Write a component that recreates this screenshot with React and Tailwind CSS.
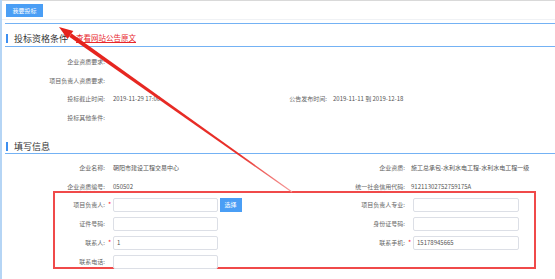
import React from "react";

const InfoRow = ({ label, value, right, rightValue, rightStart = 222, cls = "h-[18.5px]" }) => (
  <div className={`flex items-center ${cls}`}>
    <div className="flex items-center" style={{ width: rightStart }}>
      <span className="w-[100px] text-right whitespace-nowrap text-[#666]">{label}</span>
      <span className="ml-[8px] whitespace-nowrap text-[#555]">{value}</span>
    </div>
    {right && (
      <div className="flex items-center">
        <span className="w-[100px] text-right whitespace-nowrap text-[#666]">{right}</span>
        <span className="ml-[6px] whitespace-nowrap text-[#555]">{rightValue}</span>
      </div>
    )}
  </div>
);

const Input = ({ value, w = "w-[105px]" }) => (
  <div
    className={`${w} h-[13.5px] border border-[#dcdfe6] rounded-[2px] bg-white flex items-center pl-[3px] text-[#555]`}
  >
    {value}
  </div>
);

const FormCell = ({ label, required, value, labelW, inputW, button }) => (
  <div className="flex items-center">
    <span className={`${labelW} text-right whitespace-nowrap text-[#666]`}>{label}</span>
    <span className="w-[8px] pl-[3px] text-[#f23] text-[7px] leading-none">{required ? "*" : ""}</span>
    <Input value={value} w={inputW} />
    {button && (
      <button className="ml-[1.5px] w-[22px] h-[14px] bg-[#4a9ef5] text-white text-[6px] leading-none">
        选择
      </button>
    )}
  </div>
);

const FormRow = ({ left, right }) => (
  <div className="flex items-center h-[13.5px]">
    <div className="w-[250px]">
      {left && <FormCell labelW="w-[50px]" inputW="w-[105px]" {...left} />}
    </div>
    <div>{right && <FormCell labelW="w-[100px]" inputW="w-[106px]" {...right} />}</div>
  </div>
);

const Heading = ({ title, pt, children }) => (
  <div className={`flex items-center h-[23px] border-b border-[#74b2f4] ${pt}`}>
    <span className="ml-[1px] w-[2px] h-[9px] bg-[#3d8ff0]" />
    <span className="ml-[6px] text-[9px] leading-none text-[#333]">{title}</span>
    {children}
  </div>
);

export default function App() {
  return (
    <div className="relative w-[555px] h-[279px] overflow-hidden bg-white border-l-2 border-[#b5d5f5] font-['Noto_Sans_CJK_SC','Noto_Sans',sans-serif] text-[6px] leading-none">
      <div className="h-[20px] border-t border-b border-t-[#d9d9d9] border-b-[#f0f2f5] pt-[3px] pl-[4px]">
        <button className="w-[37px] h-[13px] bg-[#4a9ef5] text-white text-[6px] leading-none">
          我要投标
        </button>
      </div>

      <div className="ml-[3px] mt-[3px] border-t border-[#74b2f4]">
        <Heading title="投标资格条件" pt="pt-[6px]">
          <span className="ml-[8px] text-[7.5px] leading-none text-[#e8262b] underline">
            查看网站公告原文
          </span>
        </Heading>
        <div className="pt-[6px]">
          <InfoRow label="企业资质要求:" />
          <InfoRow label="项目负责人资质要求:" />
          <InfoRow
            label="投标截止时间:"
            value="2019-11-29 17:00"
            right="公告发布时间:"
            rightValue="2019-11-11 到 2019-12-18"
          />
          <InfoRow label="投标其他条件:" />
        </div>
      </div>

      <div className="ml-[3px] mt-[4px]">
        <Heading title="填写信息" pt="pt-[8px]" />
        <div className="pt-[4px]">
          <InfoRow
            cls="h-[19px]"
            rightStart={300}
            label="企业名称:"
            value="朝阳市建设工程交易中心"
            right="企业资质:"
            rightValue="施工总承包-水利水电工程-水利水电工程一级"
          />
          <InfoRow
            cls="h-[14px] pt-[5px]"
            rightStart={300}
            label="企业资质编号:"
            value="050502"
            right="统一社会信用代码:"
            rightValue="91211302752759175A"
          />
        </div>
        <div className="ml-[48px] w-[483px] h-[78px] border-2 border-[#f04a4a] pt-[5px] flex flex-col gap-[5.5px]">
          <FormRow
            left={{ label: "项目负责人:", required: true, button: true }}
            right={{ label: "项目负责人专业:" }}
          />
          <FormRow left={{ label: "证件号码:" }} right={{ label: "身份证号码:" }} />
          <FormRow
            left={{ label: "联系人:", required: true, value: "1" }}
            right={{ label: "联系手机:", required: true, value: "15178945665" }}
          />
          <FormRow left={{ label: "联系电话:" }} />
        </div>
      </div>

      <svg className="absolute inset-0 pointer-events-none" width="555" height="279">
        <defs>
          <linearGradient id="shaft" x1="68" y1="35" x2="292" y2="193" gradientUnits="userSpaceOnUse">
            <stop offset="0" stopColor="#e5221c" />
            <stop offset="0.75" stopColor="#e8302a" />
            <stop offset="1" stopColor="#f6a0a0" />
          </linearGradient>
        </defs>
        <polygon points="69.6,33.4 67.2,36.8 289.7,192.4 290.3,191.6" fill="url(#shaft)" />
        <polygon points="57,27 65.5,39 71.3,31" fill="#e5221c" />
      </svg>
    </div>
  );
}
